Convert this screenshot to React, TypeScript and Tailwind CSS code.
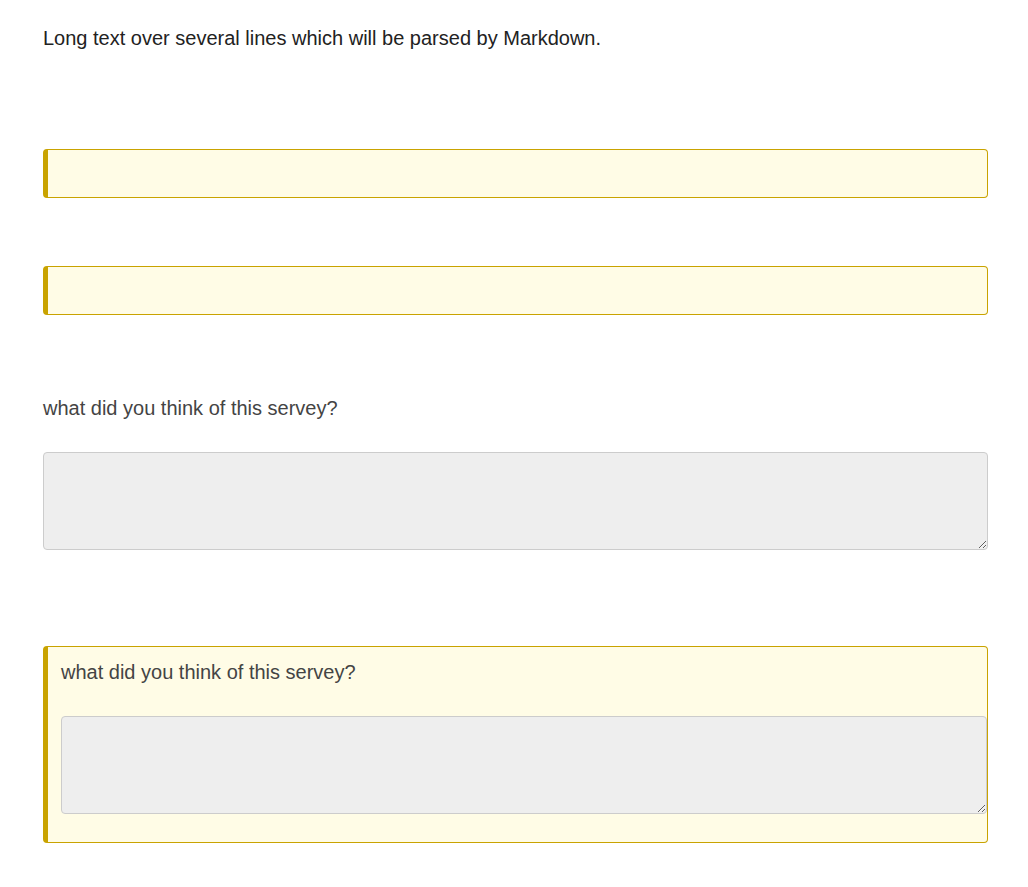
import React from "react";

function Highlight({ children, className = "" }: { children?: React.ReactNode; className?: string }) {
  return (
    <div
      className={`rounded-[4px] border border-[#c9a300] border-l-[5px] bg-[#fffce6] ${className}`}
    >
      {children}
    </div>
  );
}

function Question({ label, inBox = false }: { label: string; inBox?: boolean }) {
  return (
    <div className="flex flex-col">
      <p className="text-[20px] leading-[28px] text-[#444]">{label}</p>
      <textarea
        className={`mt-[30px] h-[98px] w-full rounded-[4px] border border-[#ccc] bg-[#eee] outline-none ${inBox ? "" : ""}`}
      />
    </div>
  );
}

export default function App() {
  return (
    <main
      className="min-h-screen bg-white pl-[43px] pr-[40px] pt-[24px] pb-[44px]"
      style={{ fontFamily: '"Liberation Sans", Arial, sans-serif' }}
    >
      <p className="text-[20px] leading-[28px] text-[#222]">
        Long text over several lines which will be parsed by Markdown.
      </p>

      <Highlight className="mt-[97px] h-[49px]" />
      <Highlight className="mt-[68px] h-[49px]" />

      <div className="mt-[79px]">
        <Question label="what did you think of this servey?" />
      </div>

      <Highlight className="mt-[96px] pl-[13px] pt-[11px] pb-[28px]">
        <Question label="what did you think of this servey?" inBox />
      </Highlight>
    </main>
  );
}
